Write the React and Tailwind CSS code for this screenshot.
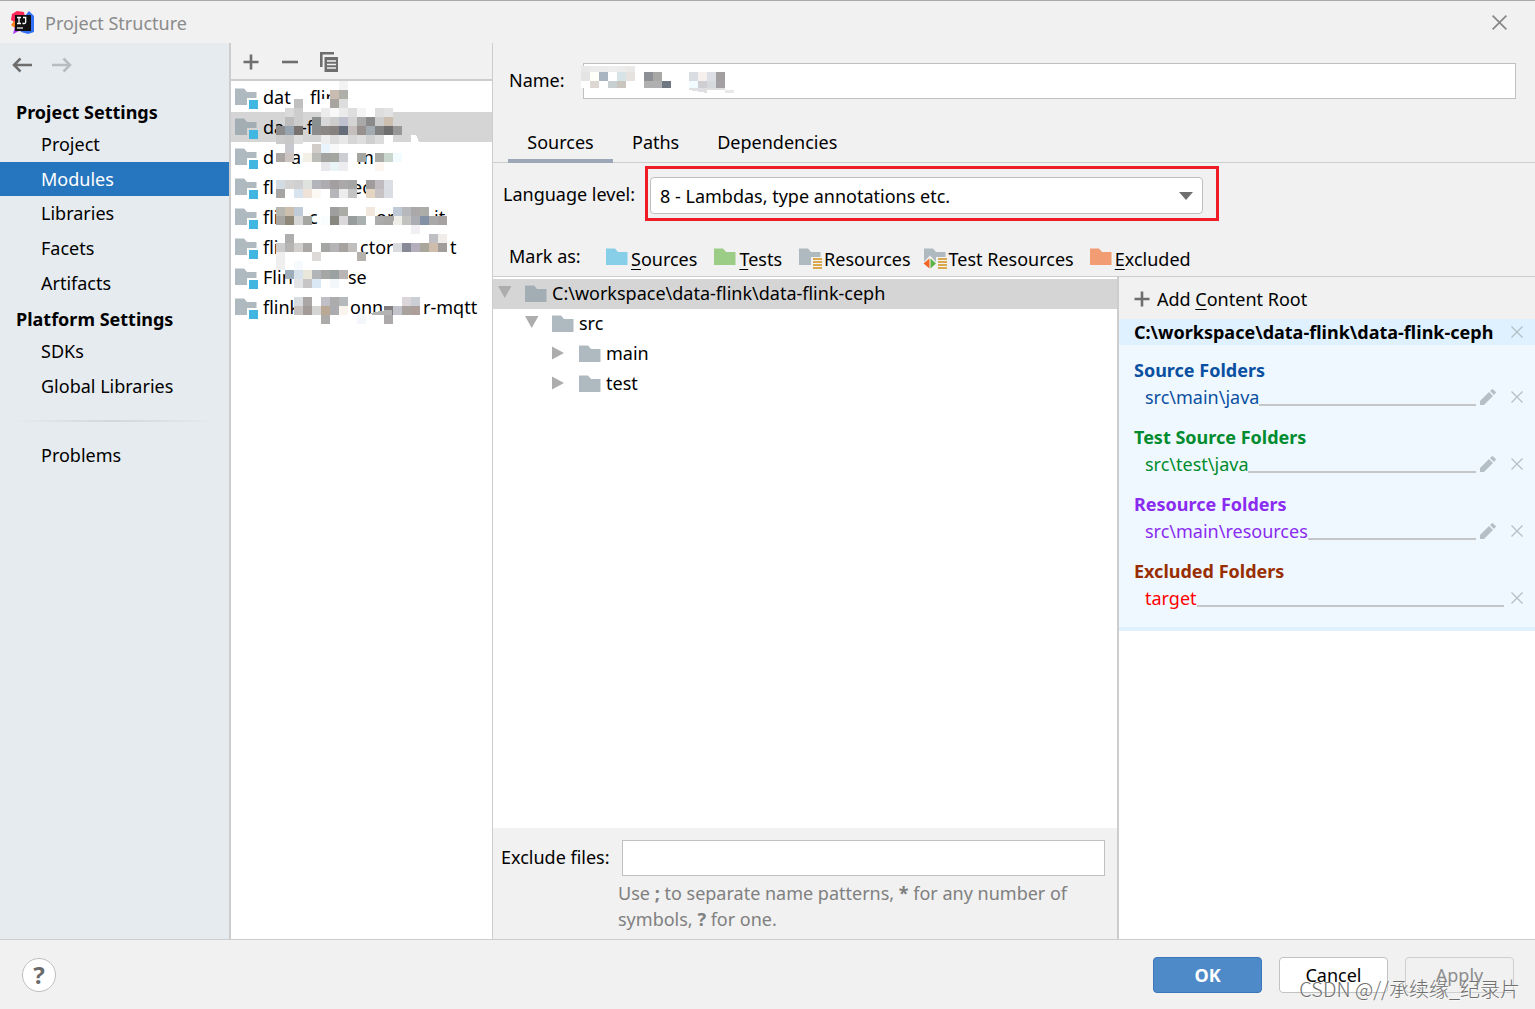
import React from "react";

const FOLDER_PATH = "M0 1.5H9L12 5H21.5V18H0Z";

function Folder({ color = "#afb9c0", children }) {
  return (
    <svg width="25" height="24" viewBox="0 0 25 24" className="shrink-0 overflow-visible" aria-hidden="true">
      <path d={FOLDER_PATH} fill={color} />
      {children}
    </svg>
  );
}

function ModuleIcon({ selected }) {
  return (
    <Folder color={selected ? "#a3adb4" : "#afb9c0"}>
      <rect x="12" y="11" width="12" height="11" fill={selected ? "#d5d5d5" : "#ffffff"} />
      <rect x="14" y="13" width="9" height="9" fill="#40b6e0" />
    </Folder>
  );
}

function Lines() {
  return (
    <>
      <rect x="12" y="10" width="11" height="13" fill="#f2f2f2" />
      {[11, 14, 17, 20].map((y) => (
        <rect key={y} x="14" y={y} width="9" height="2" fill="#dba84e" />
      ))}
    </>
  );
}

function Plus() {
  return (
    <svg width="16" height="16" viewBox="0 0 16 16" aria-hidden="true">
      <path d="M8 .5V15.5M.5 8H15.5" stroke="#6e6e6e" strokeWidth="2.6" fill="none" />
    </svg>
  );
}

function Cross({ size = 12, color = "#b4bfc6" }) {
  return (
    <svg width={size} height={size} viewBox="0 0 12 12" aria-hidden="true">
      <path d="M.5 .5L11.5 11.5M11.5 .5L.5 11.5" stroke={color} strokeWidth="1.3" fill="none" />
    </svg>
  );
}

function Pencil() {
  return (
    <svg width="16" height="16" viewBox="0 0 16 16" aria-hidden="true">
      <path d="M0 12L9 3L13 7L4 16H0Z" fill="#b4bfc6" />
      <path d="M10 2L12 .3Q12.6 -.2 13.2 .4L15.6 2.8Q16.2 3.4 15.7 4L14 6Z" fill="#b4bfc6" />
    </svg>
  );
}

function Arrow({ color, flip }) {
  return (
    <svg width="20" height="16" viewBox="0 0 20 16" className={flip ? "-scale-x-100" : ""} aria-hidden="true">
      <path d="M20 8H2M8.5 1.5L2 8L8.5 14.5" stroke={color} strokeWidth="2.5" fill="none" />
    </svg>
  );
}

function Logo() {
  return (
    <svg width="24" height="24" viewBox="0 0 24 24" aria-hidden="true">
      <path d="M1 3L6 0L13 1L15 12L8 14L0 9Z" fill="#fe2857" />
      <path d="M0 14L3 10L7 12L5 18Z" fill="#fc801d" />
      <path d="M2 23L4 15L14 16L15 21L8 20Z" fill="#af3ef5" />
      <path d="M14 5L18 0L23 5V21L17 23L10 21Z" fill="#3470f5" />
      <rect x="4" y="4" width="16" height="16" fill="#111111" />
      <path d="M6 6.5H10M8 6.5V12.5M6 12.5H10M12 6.5H14.7V11Q14.7 12.5 13.4 12.5H11.5" stroke="#fff" strokeWidth="1.3" fill="none" />
      <path d="M6 17H12" stroke="#fff" strokeWidth="1.2" />
    </svg>
  );
}

function Triangle({ open }) {
  return (
    <svg width="14" height="14" viewBox="0 0 14 14" className="shrink-0" aria-hidden="true">
      <path d={open ? "M0 0H13.5L6.7 12Z" : "M0 0.5V13.5L12 7Z"} fill="#adadad" />
    </svg>
  );
}

/* Each entry: y, then [column, colour] pairs on a nine pixel grid. */
const LIST_CELLS = [
  [0, [[7, "#f3f3f3"]]],
  [9, [[6, "#c9bdb2"], [7, "#b0aea9"]]],
  [18, [[2, "#c0c0c0"], [5, "#fff"], [6, "#a8a5a0"], [7, "#dddddd"]]],
  [27, [[1, "#dadada"], [2, "#cccccc"], [5, "#ececec"], [6, "#f8f8f8"], [7, "#ebebeb"], [8, "#dedede"], [9, "#f4f4f4"], [10, "#fff"], [11, "#dddddd"], [12, "#e2e2e2"]]],
  [36, [[1, "#bdbdbd"], [2, "#cccccc"], [4, "#8a8f90"], [5, "#d8d8d8"], [6, "#cdcdcd"], [7, "#bfc2ce"], [8, "#d4d4d4"], [9, "#a9a9a9"], [10, "#8a8a8a"], [11, "#cccccc"], [12, "#cdbfb0"]]],
  [45, [[0, "#8c8c8c"], [1, "#98a3b0"], [2, "#77716f"], [4, "#8d8d8d"], [5, "#8a8785"], [6, "#85817f"], [7, "#656e78"], [8, "#c4bfbd"], [9, "#97908d"], [10, "#a4abb0"], [11, "#828282"], [12, "#6f6f6f"], [13, "#979797"]]],
  [54, [[0, "#cccccc"], [1, "#c8c8c8"], [2, "#dddddd"], [5, "#eeeeee"], [6, "#dddddd"], [7, "#e8e8e8"], [8, "#d6d6d6"], [9, "#dedede"], [10, "#cfcfcf"], [11, "#dcdcdc"], [12, "#fff"]]],
  [63, [[1, "#c8c9ce"], [4, "#d2cdc8"], [5, "#eaf4fc"], [6, "#f8f8f8"]]],
  [72, [[0, "#a9a6a4"], [1, "#cdc4c2"], [3, "#f2f0e6"], [4, "#bbbcb8"], [5, "#a2a3a0"], [6, "#a3a5a0"], [7, "#cdced4"], [9, "#a5a5a0"], [11, "#a9aba6"], [12, "#c9d6ce"], [13, "#f2fbff"]]],
  [81, [[5, "#e8e8ec"], [6, "#e9f4f6"], [7, "#ededf0"], [11, "#fdf6f0"]]],
  [99, [[0, "#d3dbe3"], [1, "#d5d3d2"], [2, "#d0cfd2"], [3, "#e0e2df"], [4, "#b4b5ba"], [5, "#aeacb0"], [6, "#a39fa0"], [7, "#aaa8a8"], [8, "#a5a5a5"], [10, "#a09c9c"], [11, "#bfbbbf"], [12, "#dcdee4"]]],
  [108, [[0, "#a6a5a4"], [2, "#d8e3ed"], [3, "#efe2d9"], [4, "#fcf8f4"], [6, "#b6b6ba"], [7, "#ececec"], [8, "#c4c4c4"], [10, "#e4d4c2"], [11, "#c7c3c5"], [12, "#dadde4"]]],
  [126, [[0, "#b8b6b0"], [1, "#cdbfae"], [2, "#bfcbd7"], [6, "#a09fa0"], [7, "#acaca7"], [10, "#f2e7dc"], [13, "#bfcad6"], [14, "#b6b8bc"], [15, "#aaa8a8"], [16, "#acaca8"]]],
  [135, [[0, "#a6a5a2"], [1, "#8f8879"], [2, "#d6d6d6"], [3, "#a5a6a2"], [5, "#fafdfd"], [6, "#898880"], [7, "#dad8da"], [8, "#989c9c"], [9, "#aab0b0"], [11, "#acacac"], [12, "#a9a5a5"], [13, "#efede7"], [14, "#c2c2c0"], [15, "#aaaeb2"], [16, "#8291a4"], [17, "#aaa9a9"], [18, "#a6a2a2"]]],
  [144, [[15, "#f1eff2"]]],
  [153, [[1, "#afaeae"], [17, "#bfbfc3"], [18, "#f0ede9"]]],
  [162, [[0, "#cccccc"], [1, "#b5b4b2"], [2, "#d0cfcd"], [3, "#aaa8a7"], [5, "#a3a6a2"], [6, "#b4b3b5"], [7, "#a5a29f"], [8, "#c0bfbe"], [13, "#d9dadd"], [14, "#878a96"], [15, "#b2aebb"], [16, "#a9a69c"], [17, "#cebdab"], [18, "#a19d9b"]]],
  [171, [[0, "#eeeeee"], [4, "#dedada"], [9, "#b5b1ad"]]],
  [180, [[0, "#eeeeee"], [2, "#f6fafd"]]],
  [189, [[1, "#9dadb9"], [2, "#d7e2ea"], [3, "#e9e6da"], [4, "#b2b5b8"], [5, "#a5a7a4"], [6, "#9ba2a2"], [7, "#b9b5b5"]]],
  [198, [[2, "#e3e4e5"], [3, "#c8c5c6"], [4, "#d9e8f4"], [6, "#f3f7fa"]]],
  [216, [[2, "#d9dcde"], [3, "#a9a6a5"], [5, "#c0bfc5"], [6, "#acacac"], [7, "#b6b9bb"], [14, "#dad6d9"], [15, "#ccced6"]]],
  [225, [[2, "#c5c1c1"], [3, "#a29b98"], [4, "#d5d5d3"], [5, "#b9a994"], [6, "#aaacb0"], [7, "#faf4ee"], [12, "#837f80"], [13, "#c3c4cb"], [14, "#a9a29f"], [15, "#ae9e99"]]],
  [234, [[5, "#adaaaa"], [9, "#f3f7fb"], [12, "#aca9ab"]]],
];

const NAME_CELLS = [
  [0, [[0, "#e8e8e8"], [1, "#ececec"], [2, "#ececec"], [3, "#eeeeee"], [4, "#ececec"], [5, "#eae9e8"]]],
  [6, [[0, "#e4e4e4"], [1, "#fffffa"], [2, "#a9b5c1"], [3, "#fff"], [4, "#d6e4e8"], [5, "#e6e2df"], [7, "#8d9197"], [8, "#a8a8a6"], [12, "#d9dde2"], [13, "#f5f0ee"], [14, "#dcdfe6"], [15, "#a39fa0"]]],
  [15, [[0, "#fff"], [1, "#ddd7d4"], [3, "#c8cfd0"], [4, "#cbc5bf"], [7, "#b0b0b0"], [8, "#b0b0b0"], [9, "#6f7782"], [12, "#f2fbff"], [13, "#cfced2"], [14, "#d6dadd"], [15, "#a4a1a4"]]],
];

function Mosaic({ cells, width, height, className, children }) {
  return (
    <svg width={width} height={height} className={className} shapeRendering="crispEdges" aria-hidden="true">
      {cells.map(([y, row]) =>
        row.map(([c, fill]) => (
          <rect key={`${y}-${c}`} x={c * 9} y={y} width="9" height={y === 15 ? 7 : 9} fill={fill} />
        ))
      )}
      {children}
    </svg>
  );
}

/* Visible pieces of each module name, with the left offset of every piece. */
const MODULES = [
  [["dat", 0], ["flink", 47]],
  [["da", 0], ["-f", 38]],
  [["d", 0], ["a", 28], ["m", 94]],
  [["fl", 0], ["ec", 89]],
  [["fli", 0], ["c", 46], ["or", 113], ["it", 171]],
  [["fli", 0], ["ctor", 97], ["t", 187]],
  [["Flin", 0], ["se", 85]],
  [["flink", 0], ["onn", 87], ["r-mqtt", 160]],
];

function NavItem({ children, selected }) {
  return (
    <a
      href="#"
      aria-current={selected ? "page" : undefined}
      className={selected ? "flex h-[34px] items-center bg-[#2675bf] pl-[41px] text-white" : "flex h-[35px] items-center pb-px pl-[41px]"}
    >
      {children}
    </a>
  );
}

function NavHeading({ children }) {
  return <h2 className="flex h-[33px] items-center pt-[3px] pl-4 font-bold">{children}</h2>;
}

function MarkButton({ icon, label, underline, className }) {
  return (
    <button type="button" className={"flex items-center " + (className || "")}>
      <span className="mt-[3px]">{icon}</span>
      <span className="pt-[2px]">
        {underline ? <span className="underline underline-offset-3">{label[0]}</span> : label[0]}
        {label.slice(1)}
      </span>
    </button>
  );
}

function TreeRow({ indent, open, label, selected }) {
  return (
    <div
      role="treeitem"
      aria-expanded={open}
      aria-selected={!!selected}
      className={"flex h-[30px] items-center pb-[2px] " + indent + (selected ? " bg-[#d5d5d5]" : "")}
    >
      <Triangle open={open} />
      <span className="ml-[13px] flex items-center pt-[5px]">
        <Folder color={selected ? "#a3adb4" : "#afb9c0"} />
      </span>
      <span className="ml-[2px]">{label}</span>
    </div>
  );
}

function FolderGroup({ title, path, color, editable }) {
  return (
    <section className={color}>
      <h3 className="h-[27px] leading-[27px] font-bold">{title}</h3>
      <div className="flex h-[26px] items-center pl-[11px]">
        <span>{path}</span>
        <span className="mt-4 h-[2px] flex-1 bg-[#c4c6c8]" />
        {editable && (
          <button type="button" aria-label={"Edit " + path} className="ml-1">
            <Pencil />
          </button>
        )}
        <button type="button" aria-label={"Remove " + path} className={editable ? "ml-[15px]" : "ml-[7px]"}>
          <Cross />
        </button>
      </div>
    </section>
  );
}

export default function App() {
  return (
    <div className="flex min-h-screen flex-col border-t border-[#a8a8a8] bg-[#f1f1f1] font-['Noto_Sans','Noto_Sans_CJK_SC',sans-serif] text-[18px] leading-[26px] text-black">
      <header className="flex h-[42px] items-center pt-px pr-7 pl-[11px]">
        <Logo />
        <h1 className="ml-[10px] text-[#8b8b8b]">Project Structure</h1>
        <button type="button" aria-label="Close" className="ml-auto">
          <Cross size={15} color="#868686" />
        </button>
      </header>

      <main className="flex flex-1 items-stretch">
        <nav className="w-[231px] shrink-0 border-r-2 border-[#cdcdcd] bg-[#e6ebef]">
          <div className="flex h-[51px] items-start gap-5 pt-[14px] pl-3">
            <button type="button" aria-label="Back"><Arrow color="#6e6e6e" /></button>
            <button type="button" aria-label="Forward"><Arrow color="#b9bcbe" flip /></button>
          </div>
          <NavHeading>Project Settings</NavHeading>
          <NavItem>Project</NavItem>
          <NavItem selected>Modules</NavItem>
          <NavItem>Libraries</NavItem>
          <NavItem>Facets</NavItem>
          <NavItem>Artifacts</NavItem>
          <NavHeading>Platform Settings</NavHeading>
          <NavItem>SDKs</NavItem>
          <NavItem>Global Libraries</NavItem>
          <div className="mx-3 my-4 h-[2px] bg-linear-to-r from-transparent via-[#d5d7d9] to-transparent" />
          <NavItem>Problems</NavItem>
        </nav>

        <section className="flex w-[262px] shrink-0 flex-col border-r border-[#cdcdcd]">
          <div className="flex h-[38px] items-center gap-[23px] border-b-2 border-[#cdcdcd] pt-px pl-3">
            <button type="button" aria-label="Add"><Plus /></button>
            <button type="button" aria-label="Remove">
              <svg width="16" height="16" viewBox="0 0 16 16" aria-hidden="true">
                <path d="M0 8H16" stroke="#6e6e6e" strokeWidth="2.6" />
              </svg>
            </button>
            <button type="button" aria-label="Copy" className="-ml-px">
              <svg width="18" height="20" viewBox="0 0 18 20" aria-hidden="true">
                <path d="M1.3 15V1.3H14" stroke="#6e6e6e" strokeWidth="2.6" fill="none" />
                <path d="M4.5 5H18V20H4.5Z" fill="#6e6e6e" />
                <path d="M7 9H16M7 12.5H16M7 16H16" stroke="#f1f1f1" strokeWidth="1.3" />
              </svg>
            </button>
          </div>
          <div className="relative flex-1 bg-white pt-px">
            <ul>
              {MODULES.map((parts, i) => (
                <li key={i} className={"flex h-[30px] items-center pl-1 " + (i === 1 ? "bg-[#d5d5d5]" : "")}>
                  <span className="mt-1"><ModuleIcon selected={i === 1} /></span>
                  <span className="relative ml-[3px] h-[26px] flex-1">
                    {parts.map(([t, x]) => (
                      <span key={x} className="absolute" style={{ left: x }}>{t}</span>
                    ))}
                  </span>
                </li>
              ))}
            </ul>
            <Mosaic cells={LIST_CELLS} width={180} height={250} className="absolute top-0 left-[45px]">
              <path d="M92 233Q104 229 116 229V234H100Z" fill="#b5b3b1" />
              <path d="M100 144L118 135V140Z" fill="#a8a8a6" />
              <path d="M135 54H140L144 63H135Z" fill="#ffffff" />
            </Mosaic>
          </div>
        </section>

        <section className="flex min-w-0 flex-1 flex-col">
          <div className="flex items-center pt-5 pr-[19px] pl-4">
            <label htmlFor="module-name" className="mb-[2px] w-[74px]">Name:</label>
            <div className="relative flex-1">
              <input id="module-name" type="text" className="block h-9 w-full border border-[#c0c0c0] bg-white px-2" />
              <Mosaic cells={NAME_CELLS} width={160} height={30} className="absolute top-[3px] left-[-2px]">
                <rect x="144" y="24" width="9" height="3" fill="#e8e8e8" />
                <path d="M108 22H144V24H126V27L108 24Z" fill="#e0e0e2" />
              </Mosaic>
            </div>
          </div>

          <div role="tablist" className="mt-[23px] flex h-[41px] border-b border-[#cdcdcd] pl-[15px]">
            <button type="button" role="tab" aria-selected="true" className="-mb-px w-[105px] border-b-4 border-[#9ca7b8] pt-[3px]">Sources</button>
            <button type="button" role="tab" aria-selected="false" className="px-[19px]">Paths</button>
            <button type="button" role="tab" aria-selected="false" className="px-[19px]">Dependencies</button>
          </div>

          <div className="flex items-center pt-[3px] pl-[10px]">
            <label htmlFor="language-level" className="w-[142px]">Language level:</label>
            <div className="w-[574px] border-3 border-[#ee1c25] pt-2 pr-[13px] pb-1 pl-[2px]">
              <div className="relative">
                <select id="language-level" className="block h-[37px] w-full appearance-none rounded-[4px] border border-[#bfbfbf] bg-white pl-[9px]">
                  <option>8 - Lambdas, type annotations etc.</option>
                </select>
                <svg width="14" height="8" viewBox="0 0 14 8" className="pointer-events-none absolute top-[15px] right-[10px]" aria-hidden="true">
                  <path d="M0 0H14L7 8Z" fill="#6e6e6e" />
                </svg>
              </div>
            </div>
          </div>

          <div className="flex h-[56px] items-center border-b border-[#cdcdcd] pt-[18px] pl-4">
            <span className="mb-1 w-[97px]">Mark as:</span>
            <MarkButton icon={<Folder color="#87cfe8" />} label="Sources" underline />
            <MarkButton icon={<Folder color="#9bcd87" />} label="Tests" underline className="ml-[17px]" />
            <MarkButton icon={<Folder><Lines /></Folder>} label="Resources" className="ml-[17px]" />
            <MarkButton
              icon={
                <Folder>
                  <Lines />
                  <path d="M-1 16L6 8.5L13 16V22H-1Z" fill="#f2f2f2" />
                  <path d="M-.5 16.5L5.5 11.5V21.5Z" fill="#f26522" />
                  <path d="M6.5 11.5V21.5L12 16.5Z" fill="#5fb346" />
                </Folder>
              }
              label="Test Resources"
              className="ml-[13px]"
            />
            <MarkButton icon={<Folder color="#f29c73" />} label="Excluded" underline className="ml-4" />
          </div>

          <div className="flex flex-1">
            <div className="flex min-w-0 flex-1 flex-col">
              <div role="tree" className="flex-1 bg-white pt-[2px]">
                <TreeRow indent="pl-[5px]" open label="C:\workspace\data-flink\data-flink-ceph" selected />
                <TreeRow indent="pl-8" open label="src" />
                <TreeRow indent="pl-[59px]" open={false} label="main" />
                <TreeRow indent="pl-[59px]" open={false} label="test" />
              </div>
              <div className="pt-3 pr-3 pb-[7px] pl-2">
                <div className="flex items-center">
                  <label htmlFor="exclude-files" className="mb-[2px] w-[121px]">Exclude files:</label>
                  <input id="exclude-files" type="text" className="block h-9 min-w-0 flex-1 border border-[#c0c0c0] bg-white px-2" />
                </div>
                <p className="mt-1 ml-[117px] w-[470px] text-[#808080]">
                  Use <b>;</b> to separate name patterns, <b>*</b> for any number of symbols, <b>?</b> for one.
                </p>
              </div>
            </div>

            <aside className="w-[418px] shrink-0 border-l-2 border-[#cdcdcd] bg-white">
              <button type="button" className="flex h-[42px] w-full items-center gap-[7px] bg-[#f1f1f1] pt-[2px] pl-[15px]">
                <Plus />
                <span>Add <span className="underline underline-offset-3">C</span>ontent Root</span>
              </button>
              <div className="flex h-[26px] items-center justify-between bg-[#dff0fe] pr-3 pl-[15px] font-bold">
                <span>C:\workspace\data-flink\data-flink-ceph</span>
                <button type="button" aria-label="Remove content root"><Cross /></button>
              </div>
              <div className="flex flex-col gap-[14px] border-b-4 border-[#dff0fe] bg-[#eff8ff] pt-3 pr-3 pb-4 pl-[15px]">
                <FolderGroup title="Source Folders" path="src\main\java" color="text-[#0a50a1]" editable />
                <FolderGroup title="Test Source Folders" path="src\test\java" color="text-[#008c2e]" editable />
                <FolderGroup title="Resource Folders" path="src\main\resources" color="text-[#8a2bf0]" editable />
                <FolderGroup title="Excluded Folders" path="target" color="text-[#992e00] [&_div]:text-[#ff0000]" />
              </div>
            </aside>
          </div>
        </section>
      </main>

      <footer className="relative flex h-[70px] items-center border-t border-[#cdcdcd] pr-[21px] pl-[22px]">
        <button type="button" aria-label="Help" className="flex size-[34px] items-center justify-center rounded-full border border-[#bfbfbf] bg-white text-[24px] font-bold text-[#6a6a6a]">?</button>
        <div className="ml-auto flex gap-[17px]">
          <button type="button" className="h-9 w-[109px] rounded-[4px] border border-[#3b76bb] bg-[#4e8ac8] font-bold text-white">OK</button>
          <button type="button" className="h-9 w-[109px] rounded-[4px] border border-[#c2c2c2] bg-white">Cancel</button>
          <button type="button" disabled className="h-9 w-[109px] rounded-[4px] border border-[#cfcfcf] text-[#8c8c8c]">Apply</button>
        </div>
        <span className="pointer-events-none absolute right-[15px] bottom-[7px] font-['Noto_Sans_CJK_SC',sans-serif] text-[20px] font-light text-[#707070] [text-shadow:1px_1px_0_#ffffff80]">CSDN @//承续缘_纪录片</span>
      </footer>
    </div>
  );
}
